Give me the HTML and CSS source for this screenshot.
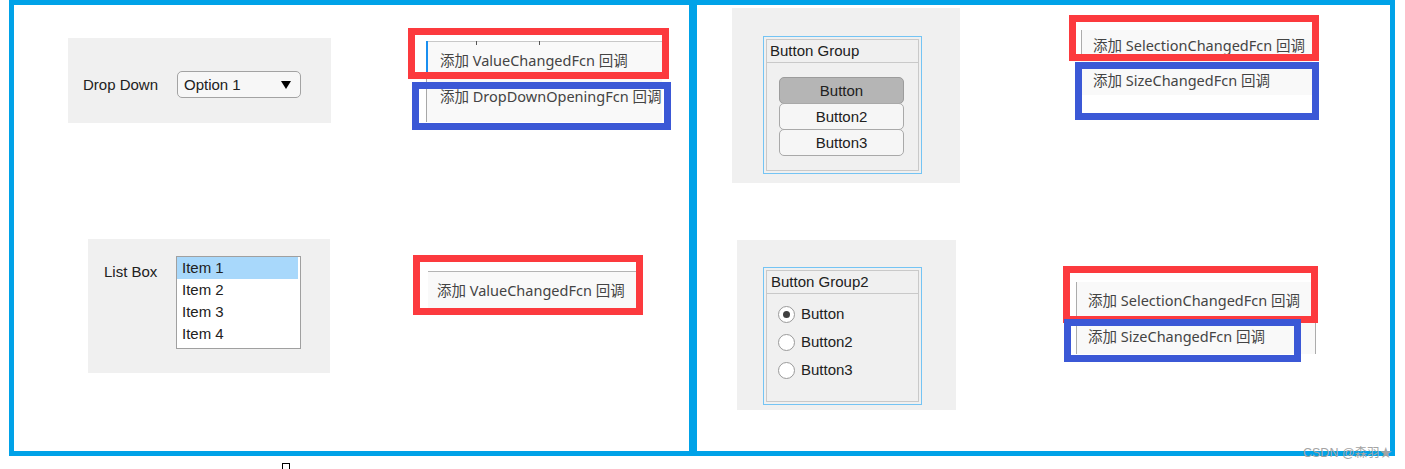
FILE: index.html
```html
<!DOCTYPE html>
<html lang="zh">
<head>
<meta charset="utf-8">
<title>Callbacks</title>
<link rel="stylesheet" href="styles.css">
</head>
<body>
<div class="page">
  <div class="frames">
    <div class="frame frame-left">
      <div class="cell">
        <div class="panel panel-dd">
          <span class="lbl lbl-dd">Drop Down</span>
          <div class="dropdown">
            <span>Option 1</span>
            <svg class="dd-arrow" width="10" height="8" viewBox="0 0 10 8"><polygon points="0,0 10,0 5,8" fill="#000"/></svg>
          </div>
        </div>
      </div>
      <div class="cell">
        <div class="shot m1">
          <div class="menu">
            <span class="tick t1"></span><span class="tick t2"></span>
            <div class="mi focus">添加 ValueChangedFcn 回调</div>
            <div class="mi">添加 DropDownOpeningFcn 回调</div>
          </div>
          <span class="anno red a1r"></span>
          <span class="anno blue a1b"></span>
        </div>
      </div>
      <div class="cell">
        <div class="panel panel-lb">
          <span class="lbl lbl-lb">List Box</span>
          <div class="listbox">
            <div class="li sel">Item 1</div>
            <div class="li">Item 2</div>
            <div class="li">Item 3</div>
            <div class="li">Item 4</div>
          </div>
        </div>
      </div>
      <div class="cell">
        <div class="shot m2">
          <div class="menu">
            <div class="mi">添加 ValueChangedFcn 回调</div>
          </div>
          <span class="anno red a2r"></span>
        </div>
      </div>
    </div>
    <div class="frame frame-right">
      <div class="cell">
        <div class="panel panel-bg">
          <div class="group">
            <div class="group-in">
              <div class="g-title">Button Group</div>
              <div class="btns">
                <div class="tbtn on">Button</div>
                <div class="tbtn">Button2</div>
                <div class="tbtn">Button3</div>
              </div>
            </div>
          </div>
        </div>
      </div>
      <div class="cell">
        <div class="shot m3">
          <div class="menu">
            <div class="mi first">添加 SelectionChangedFcn 回调</div>
            <div class="mi second">添加 SizeChangedFcn 回调</div>
          </div>
          <span class="anno red a3r"></span>
          <span class="anno blue a3b"></span>
        </div>
      </div>
      <div class="cell">
        <div class="panel panel-rg">
          <div class="group">
            <div class="group-in">
              <div class="g-title">Button Group2</div>
              <div class="radios">
                <div class="rb"><span class="circle on"></span><span>Button</span></div>
                <div class="rb"><span class="circle"></span><span>Button2</span></div>
                <div class="rb"><span class="circle"></span><span>Button3</span></div>
              </div>
            </div>
          </div>
        </div>
      </div>
      <div class="cell">
        <div class="shot m4">
          <div class="menu">
            <div class="mi">添加 SelectionChangedFcn 回调</div>
            <div class="mi">添加 SizeChangedFcn 回调</div>
          </div>
          <span class="anno red a4r"></span>
          <span class="anno blue a4b"></span>
        </div>
      </div>
    </div>
  </div>
  <div class="foot">
    <span class="cursor"></span>
  </div>
  <span class="watermark">CSDN @森羽★</span>
</div>
</body>
</html>
```
FILE: styles.css
```css
* { box-sizing: border-box; }
html, body { margin: 0; padding: 0; background: #fff; }
body { width: 1405px; height: 469px; overflow: hidden; }

.page {
  position: relative;
  width: 1405px;
  height: 469px;
  font-family: "Liberation Sans", Arial, sans-serif;
}

.frames {
  display: flex;
  padding-left: 9px;
}

.frame {
  display: grid;
  height: 456px;
  border: 5px solid #00a2e8;
  grid-template-rows: 200px 1fr;
}
.frame-left {
  width: 684px;
  border-right-width: 4px;
  grid-template-columns: 390px 1fr;
}
.frame-right {
  width: 702px;
  border-left-width: 4px;
  grid-template-columns: 343px 1fr;
}

.cell { min-width: 0; }

/* ---------- MATLAB panels ---------- */
.panel {
  background: #f0f0f0;
  color: #212121;
  font-size: 15px;
}
.lbl { line-height: 18px; }

.panel-dd {
  display: flex;
  align-items: flex-start;
  width: 263px;
  height: 85px;
  margin: 33px 0 0 54px;
  padding: 33px 0 0 15px;
}
.lbl-dd { width: 94px; margin-top: 5px; }
.dropdown {
  display: flex;
  align-items: center;
  justify-content: space-between;
  width: 124px;
  height: 27px;
  border: 1px solid #a3a3a3;
  border-radius: 5px;
  background: #f7f7f7;
  padding: 0 9px 0 6px;
  line-height: 18px;
}
.dd-arrow { display: block; margin-top: 1px; }

.panel-lb {
  display: flex;
  align-items: flex-start;
  width: 242px;
  height: 134px;
  margin: 34px 0 0 74px;
  padding: 17px 0 0 16px;
}
.lbl-lb { width: 72px; margin-top: 7px; }
.listbox {
  width: 125px;
  height: 93px;
  border: 1px solid #a0a0a0;
  background: #fff;
}
.li {
  height: 22px;
  line-height: 22px;
  padding-left: 5px;
  margin-right: 2px;
}
.li.sel { background: #a8d8fb; }

.panel-bg {
  width: 228px;
  height: 175px;
  margin: 3px 0 0 35px;
  padding: 28px 0 0 31px;
}
.panel-rg {
  width: 219px;
  height: 170px;
  margin: 35px 0 0 40px;
  padding: 27px 0 0 26px;
}

.group {
  width: 159px;
  height: 138px;
  border: 1px solid #74c4f4;
  padding: 2px;
}
.group-in {
  height: 100%;
  border: 1px solid #c9c9c9;
}
.g-title {
  height: 23px;
  line-height: 22px;
  padding-left: 3px;
  border-bottom: 1px solid #c9c9c9;
}
.panel-rg .g-title { padding-left: 4px; }

.btns { padding: 14px 0 0 12px; }
.tbtn {
  width: 125px;
  height: 27px;
  line-height: 26px;
  text-align: center;
  border: 1px solid #a9a9a9;
  border-radius: 5px;
  background: #f6f6f6;
  margin-bottom: -1px;
}
.tbtn.on {
  background: #b5b5b5;
  border-color: #9c9c9c;
}

.radios { padding: 6px 0 0 11px; }
.rb {
  display: flex;
  align-items: center;
  height: 28px;
  line-height: 18px;
}
.circle {
  width: 17px;
  height: 17px;
  border: 1px solid #9a9a9a;
  border-radius: 50%;
  background: #fff;
  margin-right: 6px;
  display: flex;
  align-items: center;
  justify-content: center;
}
.circle.on::after {
  content: "";
  width: 7px;
  height: 7px;
  border-radius: 50%;
  background: #404040;
}

/* ---------- context menu screenshots ---------- */
.shot {
  position: relative;
  display: flow-root;
}
.menu {
  position: relative;
  background: #f9f9f9;
  color: #444;
  font-family: "Noto Sans", "Noto Sans CJK SC", sans-serif;
  font-size: 14.5px;
}
.mi {
  white-space: nowrap;
}

.m1 {
  width: 263px;
  height: 103px;
  margin: 23px 0 0 4px;
}
.m1 .menu {
  margin: 13px 0 0 18px;
  width: 236px;
  border-top: 1px solid #c8c8c8;
  border-left: 1px solid #a8a8a8;
  padding-bottom: 8px;
}
.m1 .mi { height: 36px; line-height: 36px; padding-left: 13px; }
.m1 .mi.focus { position: relative; }
.m1 .mi.focus::before {
  content: "";
  position: absolute;
  left: -1px;
  top: -1px;
  width: 2px;
  height: 31px;
  background: #1a8ff0;
}
.tick {
  position: absolute;
  top: -1px;
  width: 1px;
  height: 4px;
  background: #555;
}
.t1 { left: 49px; }
.t2 { left: 112px; }

.m2 {
  width: 230px;
  height: 60px;
  margin: 50px 0 0 9px;
}
.m2 .menu {
  margin: 16px 0 0 15px;
  width: 208px;
  border-top: 1px solid #b4b4b4;
}
.m2 .mi { height: 36px; line-height: 36px; padding-left: 9px; }

.m3 {
  width: 250px;
  height: 105px;
  margin: 10px 0 0 29px;
}
.m3 .menu {
  margin: 15px 0 0 12px;
  width: 231px;
}
.m3 .mi.first {
  height: 31px;
  line-height: 30px;
  padding-left: 11px;
  border-left: 1px solid #acacac;
}
.m3 .mi.second {
  height: 34px;
  line-height: 30px;
  padding-top: 4px;
  padding-left: 12px;
}

.m4 {
  width: 255px;
  height: 96px;
  margin: 61px 0 0 23px;
}
.m4 .menu {
  margin: 16px 0 0 13px;
  width: 240px;
  border-left: 1px solid #acacac;
  border-right: 1px solid #acacac;
}
.m4 .mi { height: 36px; line-height: 36px; padding-left: 11px; }

/* annotation rectangles drawn over the screenshots */
.anno {
  position: absolute;
  border: 7px solid;
}
.red { border-color: #fc3a3e; }
.blue { border-color: #3b58d6; }
.a1r { left: 0; top: 0; width: 261px; height: 51px; }
.a1b { left: 4px; top: 54px; width: 259px; height: 48px; }
.a2r { left: 0; top: 0; width: 230px; height: 60px; }
.a3r { left: 0; top: 0; width: 250px; height: 46px; }
.a3b { left: 6px; top: 47px; width: 244px; height: 58px; }
.a4r { left: 0; top: 0; width: 255px; height: 57px; }
.a4b { left: 1px; top: 53px; width: 237px; height: 43px; }

/* ---------- footer ---------- */
.foot {
  height: 13px;
  padding: 7px 0 0 282px;
}
.cursor {
  display: block;
  width: 8px;
  height: 8px;
  border: 1px solid #000;
  border-bottom: none;
}
.watermark {
  position: absolute;
  left: 1303px;
  top: 445px;
  font-family: "Liberation Sans", "Noto Sans CJK SC", sans-serif;
  font-size: 12.5px;
  line-height: 16px;
  color: #a4a4a4;
  white-space: nowrap;
}
```
